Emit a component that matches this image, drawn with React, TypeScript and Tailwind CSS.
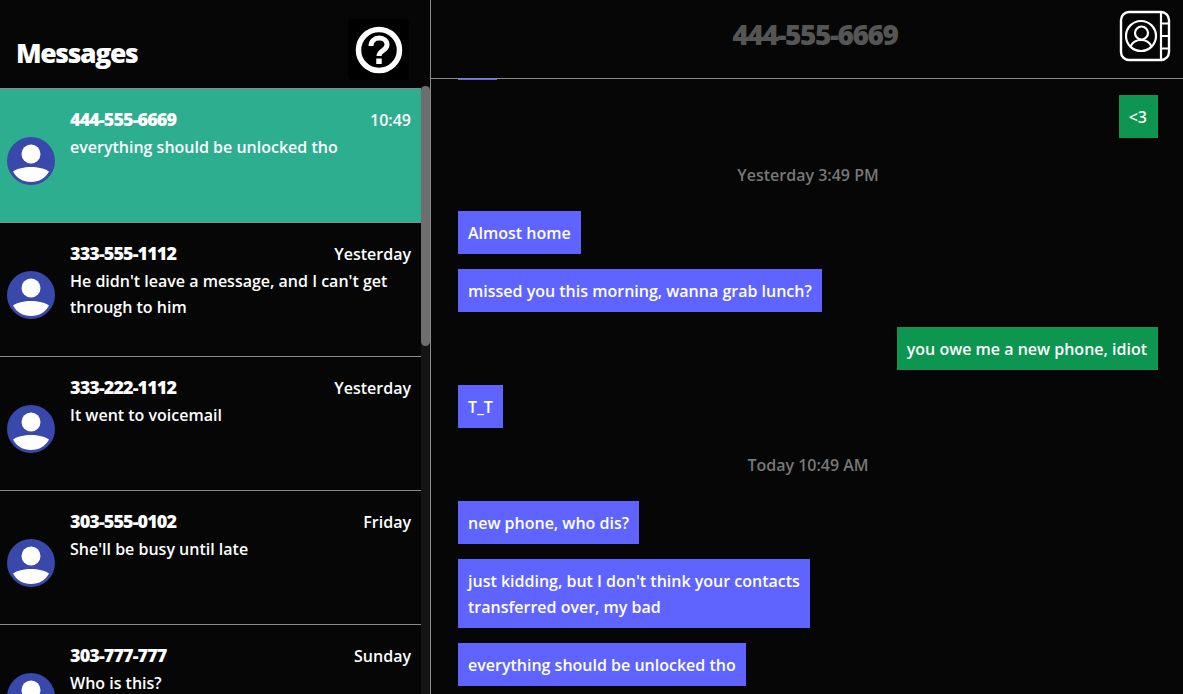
import React from "react";

const threads = [
  { phone: "444-555-6669", time: "10:49", text: "everything should be unlocked tho", active: true },
  { phone: "333-555-1112", time: "Yesterday", text: "He didn't leave a message, and I can't get through to him" },
  { phone: "333-222-1112", time: "Yesterday", text: "It went to voicemail" },
  { phone: "303-555-0102", time: "Friday", text: "She'll be busy until late" },
  { phone: "303-777-777", time: "Sunday", text: "Who is this?" },
];

function Avatar() {
  return (
    <svg width="48" height="48" viewBox="0 0 48 48" className="shrink-0">
      <circle cx="24" cy="24" r="24" fill="#3949ab" />
      <circle cx="24" cy="17" r="9.500" fill="#fff" />
      <path d="M6 34.500c4-3 11-4.500 18-4.500s14 1.500 18 4.500c-3.500 6.500-10 10.500-18 10.500s-14.500-4-18-10.500z" fill="#fff" />
    </svg>
  );
}

function ThreadRow({ phone, time, text, active }: { phone: string; time: string; text: string; active?: boolean }) {
  return (
    <div className={`relative h-[134px] shrink-0 border-b border-[#8a8a8a] ${active ? "bg-[#2dae8f]" : ""}`}>
      <div className="absolute left-[7px] top-[48px]">
        <Avatar />
      </div>
      <div className="ml-[70px] mr-[10px] pt-[17px]">
        <div className="flex justify-between leading-[26px]">
          <span className="text-[18px] font-extrabold tracking-tighter">{phone}</span>
          <span className="pt-[1px]">{time}</span>
        </div>
        <p className="leading-[26px] mt-[1px]">{text}</p>
      </div>
    </div>
  );
}

function Bubble({ children, mine }: { children: React.ReactNode; mine?: boolean }) {
  return (
    <div className={`flex ${mine ? "justify-end" : "justify-start"}`}>
      <div className={`pl-[10px] pt-[9px] pb-[8px] leading-[26px] whitespace-nowrap ${mine ? "pr-[11px] bg-[#0c964f]" : "pr-[10px] bg-[#5f63ff]"}`}>
        {children}
      </div>
    </div>
  );
}

function Stamp({ children }: { children: React.ReactNode }) {
  return <div className="text-center text-[#777] leading-[22px]">{children}</div>;
}

export default function App() {
  return (
    <div className="flex h-[694px] w-[1183px] overflow-hidden bg-[#060606] text-white font-['Open_Sans','Noto_Sans',sans-serif] text-[16px] font-semibold">
      <div className="relative w-[431px] shrink-0 border-r border-[#8a8a8a] flex flex-col">
        <div className="h-[88px] shrink-0 flex items-start justify-between pl-[16px] pr-[21px]">
          <h1 className="mt-[35px] text-[26.5px] leading-[36px] font-extrabold tracking-tighter">Messages</h1>
          <div className="mt-[19px] w-[61px] h-[61px] bg-black rounded-[4px] flex items-center justify-center">
            <svg width="48" height="48" viewBox="0 0 48 48" fill="none" stroke="#fff">
              <circle cx="24" cy="24" r="20.500" strokeWidth="5.500" />
              <path d="M16 20c0-4.800 3.500-8 8.200-8 4.500 0 7.800 2.800 7.800 6.800 0 5.700-8 5.700-8 11.200" strokeWidth="5" />
              <path d="M24 32.500v5.500" strokeWidth="5.500" />
            </svg>
          </div>
        </div>
        <div className="mr-[9px] border-t border-[#8a8a8a] flex flex-col overflow-hidden">
          {threads.map((t) => (
            <ThreadRow key={t.phone} {...t} />
          ))}
        </div>
        <div className="absolute right-0 top-[86px] bottom-0 w-[9px] bg-[#141414]">
          <div className="h-[260px] rounded-full bg-[#6e6e6e]" />
        </div>
      </div>

      <div className="flex-1 flex flex-col min-w-0">
        <div className="relative h-[79px] shrink-0 border-b border-[#8a8a8a] flex justify-center pl-[16px] pt-[15px]">
          <h2 className="text-[28px] leading-[38px] font-extrabold tracking-tighter text-[#555]">444-555-6669</h2>
          <svg width="52" height="52" viewBox="0 0 52 52" fill="none" stroke="#fff" strokeWidth="2.200" className="absolute right-[12px] top-[10px]">
            <rect x="2" y="2" width="48" height="48" rx="8" strokeWidth="2.400" />
            <path d="M42 2v48M42 13.500h8M42 26h8M42 38.500h8" />
            <circle cx="22" cy="26" r="15" />
            <circle cx="22.500" cy="23" r="6.500" />
            <path d="M11.500 36.500c2-4.500 6-6.500 10.500-6.500s8.500 2 10.500 6.500" />
          </svg>
        </div>
        <div className="relative flex-1 overflow-hidden pl-[27px] pr-[25px]">
          <div className="h-[1px] w-[39px] bg-[#5f63ff]" />
          <div className="mt-[15px]">
            <Bubble mine>&lt;3</Bubble>
          </div>
          <div className="mt-[26px]"><Stamp>Yesterday 3:49 PM</Stamp></div>
          <div className="mt-[25px] flex flex-col gap-[15px]">
            <Bubble>Almost home</Bubble>
            <Bubble>missed you this morning, wanna grab lunch?</Bubble>
            <Bubble mine>you owe me a new phone, idiot</Bubble>
            <Bubble>T_T</Bubble>
          </div>
          <div className="mt-[26px]"><Stamp>Today 10:49 AM</Stamp></div>
          <div className="mt-[25px] flex flex-col gap-[15px]">
            <Bubble>new phone, who dis?</Bubble>
            <Bubble>just kidding, but I don't think your contacts<br />transferred over, my bad</Bubble>
            <Bubble>everything should be unlocked tho</Bubble>
          </div>
        </div>
      </div>
    </div>
  );
}
